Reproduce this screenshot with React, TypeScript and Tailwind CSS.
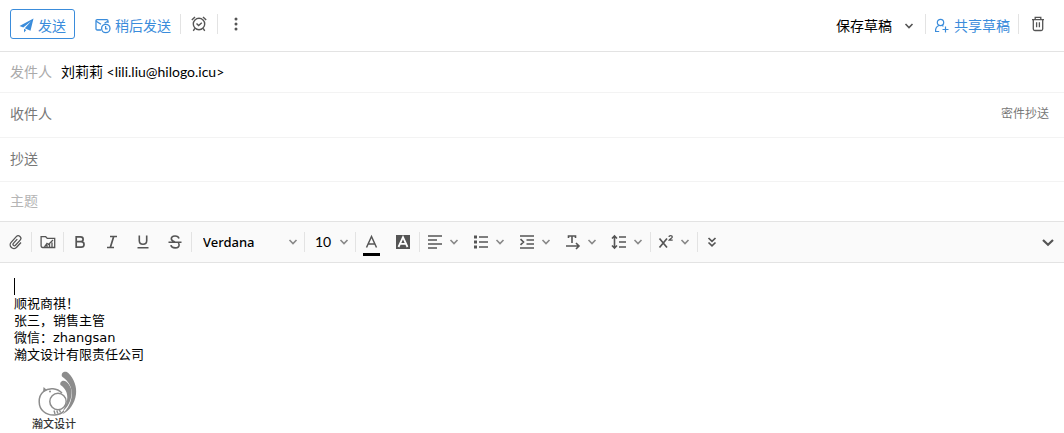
import { ReactNode, useState } from 'react';

const blue = '#3a8cdb';

const Chevron = ({ className = 'text-[#888]' }: { className?: string }) => (
  <svg className={className} width="10" height="10" viewBox="0 0 10 10" fill="none" stroke="currentColor" strokeWidth="1.6">
    <path d="M1.5 3L5 6.5 8.5 3" />
  </svg>
);

function Icon({ children, width = 1.5 }: { children: ReactNode; width?: number }) {
  return (
    <svg width="16" height="16" viewBox="0 0 16 16" fill="none" stroke="currentColor" strokeWidth={width}>
      {children}
    </svg>
  );
}

const Separator = () => <span className="h-5 w-px shrink-0 bg-[#e3e3e3]" />;

function ToolButton({ label, className = 'flex-1', children }: { label: string; className?: string; children: ReactNode }) {
  return (
    <button type="button" aria-label={label} className={`flex h-full items-center justify-center hover:bg-gray-100 ${className}`}>
      {children}
    </button>
  );
}

function MenuButton({ label, children }: { label: string; children: ReactNode }) {
  return (
    <button type="button" aria-label={label} className="flex h-full w-[46px] shrink-0 items-center gap-1.5 pl-[7px] hover:bg-gray-100">
      {children}
      <Chevron />
    </button>
  );
}

function Header() {
  return (
    <header className="flex h-[52px] items-center justify-between border-b border-[#e3e3e3] pb-[3px]">
      <div className="flex items-center pl-2.5">
        <button
          type="button"
          className="flex h-[30px] w-[65px] items-center gap-1 rounded-[3px] border border-[#3a8cdb] pt-[3px] pl-2 text-[#3a8cdb]"
        >
          <svg width="15" height="15" viewBox="0 0 15 15" fill={blue}>
            <path d="M14.5.5L.5 8l3.8 1.6L12 3.2 5.8 10.2l5.7 2.6zM5 10.8v3.7l2.3-2.6z" />
          </svg>
          发送
        </button>
        <button type="button" className="ml-5 flex h-[30px] items-center gap-1 pt-[3px] text-[#3a8cdb]">
          <svg width="16" height="16" viewBox="0 0 16 16" fill="none" stroke={blue} strokeWidth="1.3">
            <path d="M6 12H2.200c-.7 0-1.200-.5-1.200-1.200V2.900c0-.7.5-1.200 1.200-1.200h9.600c.7 0 1.200.5 1.200 1.200V5" />
            <path d="M1.200 3.200L6 6.300M12.800 3.200L9.500 5.200" />
            <circle cx="10.8" cy="10.5" r="4.2" />
            <path d="M10.600 8v2.800h2" />
          </svg>
          稍后发送
        </button>
        <span className="ml-[9px] flex items-center">
          <Separator />
          <ToolButton label="提醒" className="w-9">
            <Icon width={1.4}>
              <circle cx="8" cy="8" r="5.7" />
              <path d="M5.500 7.600L7.600 9.600 10.800 6.700M.8 4L4 1M15.200 4L12 1M3.800 12.400L2.300 14.800M12.200 12.400l1.500 2.400" />
            </Icon>
          </ToolButton>
          <Separator />
          <ToolButton label="更多" className="w-9">
            <Icon>
              <g fill="currentColor" stroke="none">
                <circle cx="8" cy="3" r="1.5" />
                <circle cx="8" cy="8" r="1.5" />
                <circle cx="8" cy="13" r="1.5" />
              </g>
            </Icon>
          </ToolButton>
        </span>
      </div>
      <div className="flex items-center pr-[18px]">
        <button type="button" className="flex h-[30px] items-center gap-3 pt-[3px] pr-[11px] text-black">
          保存草稿
          <Chevron className="text-[#555]" />
        </button>
        <Separator />
        <button type="button" className="mx-2 flex h-[30px] items-center gap-1 pt-[3px] text-[#3a8cdb]">
          <svg width="16" height="16" viewBox="0 0 16 16" fill="none" stroke={blue} strokeWidth="1.2">
            <circle cx="6.5" cy="4.5" r="3.2" />
            <path d="M5 7.500C2.500 8.500 1.300 10.500 1.600 13.500h3.600M8 7.500l1.500.8M11.500 8.500v6M8.500 11.500h6" />
          </svg>
          共享草稿
        </button>
        <Separator />
        <ToolButton label="删除" className="ml-[11px] w-4">
          <Icon width={1.3}>
            <path d="M2 3.600h12M5.200 3.400V1.300h5.600v2.100M3.300 3.800v9.200c0 .9.6 1.500 1.500 1.500h6.400c.9 0 1.500-.6 1.500-1.500V3.800M6.600 6.200v5M9.400 6.200v5" />
          </Icon>
        </ToolButton>
      </div>
    </header>
  );
}

function Recipients() {
  const [to, setTo] = useState('');
  const [cc, setCc] = useState('');
  const [subject, setSubject] = useState('');

  return (
    <section>
      <div className="flex h-[41px] items-center gap-[9px] border-b border-[#f3f3f3] px-2.5">
        <span className="text-[#aaa]">发件人</span>
        <span className="font-['Lato','Noto_Sans_CJK_SC',sans-serif] text-black">刘莉莉 &lt;lili.liu@hilogo.icu&gt;</span>
      </div>
      <div className="flex h-[45px] items-center gap-2.5 border-b border-[#f3f3f3] pr-[15px] pb-0.5 pl-2.5">
        <label htmlFor="to" className="text-[#777]">收件人</label>
        <input id="to" value={to} onChange={(e) => setTo(e.target.value)} className="min-w-0 flex-1 outline-none" />
        <button type="button" className="text-xs text-[#777]">密件抄送</button>
      </div>
      <div className="flex h-11 items-center gap-2.5 border-b border-[#f3f3f3] px-2.5 pb-0.5">
        <label htmlFor="cc" className="text-[#777]">抄送</label>
        <input id="cc" value={cc} onChange={(e) => setCc(e.target.value)} className="min-w-0 flex-1 outline-none" />
      </div>
      <div className="flex h-10 items-center border-b border-[#e3e3e3] px-2.5 pb-0.5">
        <input
          aria-label="主题"
          placeholder="主题"
          value={subject}
          onChange={(e) => setSubject(e.target.value)}
          className="min-w-0 flex-1 outline-none placeholder:text-[#b5b5b5]"
        />
      </div>
    </section>
  );
}

function Toolbar() {
  return (
    <div className="flex h-[41px] items-center border-b border-[#e3e3e3] bg-[#fafafa]">
      <ToolButton label="附件" className="w-[31px]">
        <Icon width={1.3}>
          <path d="M12 5v6.500a3.700 3.700 0 0 1-7.400 0V3.800a2.600 2.600 0 0 1 5.200 0v7a1.400 1.400 0 0 1-2.800 0V5" transform="rotate(42 8 8)" />
        </Icon>
      </ToolButton>
      <Separator />
      <ToolButton label="插入图片" className="w-[31px]">
        <Icon width={1.3}>
          <path d="M4 13.500H2.500c-.9 0-1.400-.6-1.400-1.400V2.700h4.600l1.600 1.700h7.400v9.100z" />
          <path d="M4.500 13l2.500-3.500 1.500 1 4.500-4.500M7 13v-2M9.500 13v-3M12 13V8.500" strokeWidth="1.3" />
        </Icon>
      </ToolButton>
      <Separator />
      <div className="flex h-full w-[127px]">
        <ToolButton label="粗体">
          <Icon width={1.7}>
            <path d="M4.200 2.800h4.300c3.500 0 3.500 4.900 0 4.900H4.200zM4.200 7.700h4.900c3.900 0 3.900 5.500 0 5.500H4.200z" />
          </Icon>
        </ToolButton>
        <ToolButton label="斜体">
          <Icon width={1.7}>
            <path d="M6 2.500h7M3 13.500h7M9.700 2.500l-3.400 11" />
          </Icon>
        </ToolButton>
        <ToolButton label="下划线">
          <Icon width={1.6}>
            <path d="M4.300 1.500v5.300c0 4.600 7.400 4.600 7.400 0V1.500M2.500 13.800h11" />
          </Icon>
        </ToolButton>
        <ToolButton label="删除线">
          <Icon width={1.6}>
            <path d="M12 4.500C11 1 4.500 1.300 4.300 4.800c0 1.700 1.500 2.500 3.700 3.200M3.900 11.200c.7 3.700 8.200 3.600 8.200-.2 0-.9-.3-1.500-.8-2M1.500 8.200h13" />
          </Icon>
        </ToolButton>
      </div>
      <Separator />
      <label className="relative flex h-full w-28 shrink-0 items-center">
        <select aria-label="字体" className="h-full w-full appearance-none pl-[11px] font-['Noto_Sans',sans-serif] text-[13px] font-medium text-black outline-none">
          <option>Verdana</option>
          <option>Arial</option>
          <option>Georgia</option>
        </select>
        <span className="pointer-events-none absolute right-1.5">
          <Chevron />
        </span>
      </label>
      <Separator />
      <label className="relative flex h-full w-[50px] shrink-0 items-center">
        <select aria-label="字号" className="h-full w-full appearance-none pl-2.5 font-['Lato',sans-serif] text-sm text-black outline-none">
          <option>10</option>
          <option>12</option>
          <option>14</option>
        </select>
        <span className="pointer-events-none absolute right-1.5">
          <Chevron />
        </span>
      </label>
      <Separator />
      <div className="flex h-full w-[63px]">
        <ToolButton label="文字颜色">
          <svg width="17" height="27" viewBox="0 0 17 27" fill="none" stroke="currentColor" strokeWidth="1.5">
            <path d="M3.500 18.500L8.500 7.500l5 11M5 15h7" />
            <rect y="24" width="17" height="3" fill="#000" stroke="none" />
          </svg>
        </ToolButton>
        <ToolButton label="背景颜色">
          <Icon width={1.8}>
            <rect x="1" y="1" width="14" height="14" fill="#555" stroke="none" />
            <path d="M3.500 13L8 3.200 12.500 13M5 9.800h6" stroke="#fff" />
          </Icon>
        </ToolButton>
      </div>
      <Separator />
      <MenuButton label="对齐">
        <Icon width={1.6}>
          <path d="M1 2h14M1 6h9M1 10h14M1 14h9" />
        </Icon>
      </MenuButton>
      <MenuButton label="列表">
        <Icon width={1.6}>
          <path d="M6 3h9M6 8h9M6 13h9" />
          <path d="M1 3h3M1 8h3M1 13h3" strokeWidth="3" />
        </Icon>
      </MenuButton>
      <MenuButton label="缩进">
        <Icon width={1.6}>
          <path d="M1 2h14M7.500 6H15M7.500 10H15M1 14h14M1.500 5.200L4.500 8l-3 2.800" />
        </Icon>
      </MenuButton>
      <MenuButton label="文字方向">
        <Icon width={1.6}>
          <path d="M3.500 4V2h7v2M7 2v7M1 12h13M11 9l3 3-3 3" />
        </Icon>
      </MenuButton>
      <MenuButton label="行距">
        <Icon width={1.6}>
          <path d="M8 3h7M8 8h7M8 13h7M3.500 2v12M1 4.500L3.500 2 6 4.500M1 11.500L3.500 14 6 11.500" />
        </Icon>
      </MenuButton>
      <Separator />
      <MenuButton label="上标">
        <Icon width={1.7}>
          <path d="M1.500 4.500l7.500 9M9 4.500l-7.500 9" />
          <path d="M11 3c0-1.800 3.300-1.800 3.300 0C14.300 4.200 12 5 11.200 6.200h3.500" strokeWidth="1.3" />
        </Icon>
      </MenuButton>
      <Separator />
      <ToolButton label="更多工具" className="w-7">
        <Icon width={1.7}>
          <path d="M4.500 4L8 7.300 11.500 4M4.500 8.500L8 11.800l3.500-3.300" />
        </Icon>
      </ToolButton>
      <ToolButton label="收起工具栏" className="ml-auto w-8">
        <Icon width={2.2}>
          <path d="M3 6l5 4.800L13 6" />
        </Icon>
      </ToolButton>
    </div>
  );
}

function Logo() {
  return (
    <figure className="ml-4 flex w-12 flex-col items-center pt-[7px]">
      <svg className="ml-2" width="44" height="48" viewBox="36 370 44 48" role="img" aria-label="瀚文设计">
        <g fill="none" stroke="#8c8c8c">
          <path d="M64 411C60 415.500 50 417 43.500 411.500C38 407 37.500 396.500 43.500 391.500C49 387.300 57 388 62 393" strokeWidth="1.5" />
          <circle cx="58" cy="401.500" r="8.2" strokeWidth="1.5" />
          <path d="M54 410.500l1 3.500M56.800 410.500l1 3M59.500 410l1 2.500" strokeWidth="1.4" />
        </g>
        <g fill="#8c8c8c">
          <path d="M43 392.500l.5-5.500 3.500 3z" />
          <circle cx="50" cy="391.500" r="1" />
          <path d="M62 376.500c-1.500-4 3.500-6.500 6.300-3.500 6 6 8.700 14 7.700 21.300-1.300 9.500-6.500 16.500-13.500 20 5.500-5.500 9-12.500 9.300-19.500.3-7-2.500-13-9.800-18.300z" />
          <path d="M60.500 385c-1.200-3.500 2.800-5.500 5.500-3.500 5 4 6.200 9 5.300 14.500-.9 6-4 11.500-8.800 15.500 3-5 4.800-9.500 4.800-14 0-5-1.800-9-6.800-12.500z" />
        </g>
      </svg>
      <figcaption className="font-['Liberation_Serif','Noto_Sans_CJK_SC',serif] text-[11px] leading-3 font-medium text-[#333]">瀚文设计</figcaption>
    </figure>
  );
}

export default function App() {
  return (
    <main className="bg-white font-['Noto_Sans','Noto_Sans_CJK_SC',sans-serif] text-sm text-[#555]">
      <Header />
      <Recipients />
      <Toolbar />
      <div
        role="textbox"
        aria-label="正文"
        contentEditable
        suppressContentEditableWarning
        className="px-3.5 pt-[15px] font-['DejaVu_Sans','Noto_Sans_CJK_SC',sans-serif] text-[13px] leading-[17px] text-black outline-none"
      >
        <div className="h-[17px] w-px bg-black" />
        <p>顺祝商祺！</p>
        <p>张三，销售主管</p>
        <p>微信：zhangsan</p>
        <p>瀚文设计有限责任公司</p>
        <Logo />
      </div>
    </main>
  );
}
